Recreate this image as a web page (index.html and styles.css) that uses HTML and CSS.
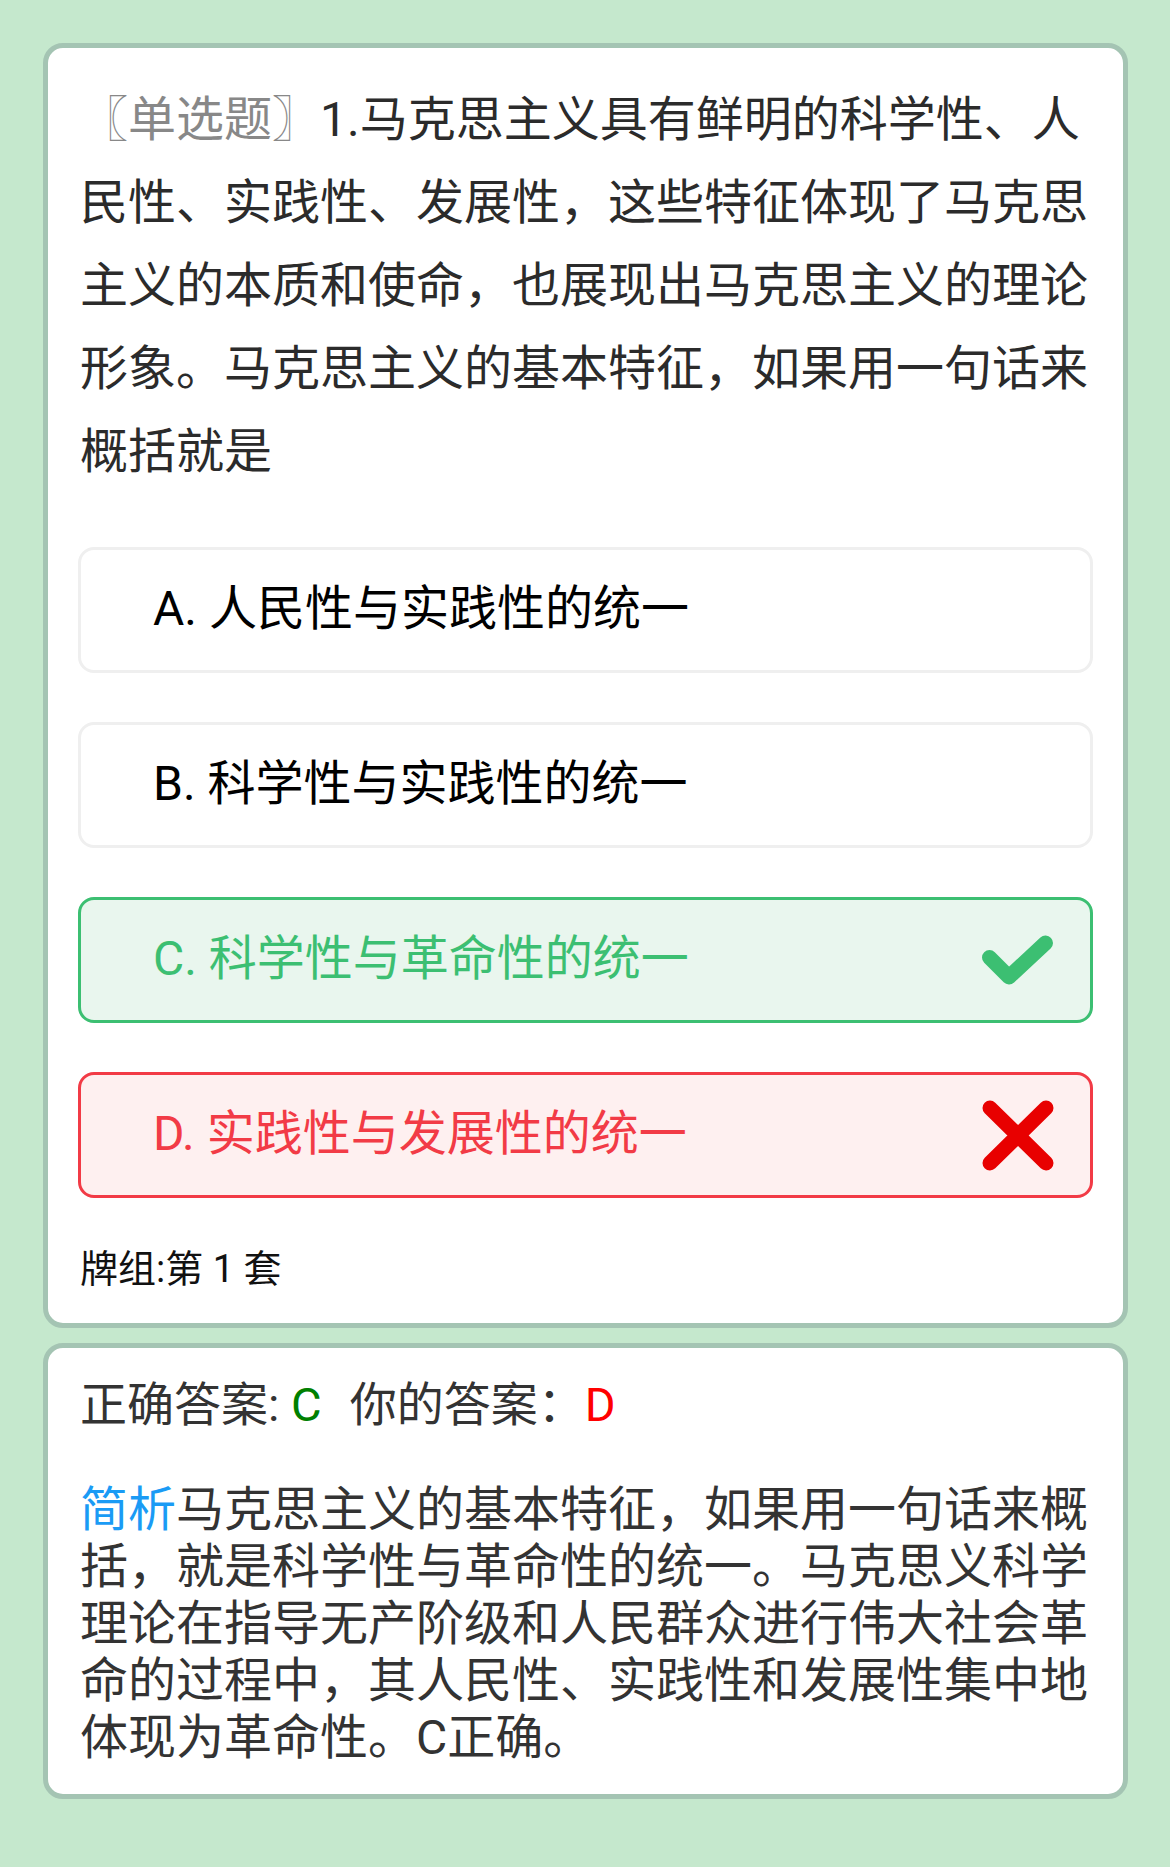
FILE: index.html
```html
<!DOCTYPE html>
<html lang="zh-CN">
<head>
  <meta charset="UTF-8">
  <title>单选题</title>
  <link rel="stylesheet" href="styles.css">
</head>
<body>

<div class="card question-card">
  <div class="question"><span class="qtype">〖单选题〗</span>1.马克思主义具有鲜明的科学性、人民性、实践性、发展性，这些特征体现了马克思主义的本质和使命，也展现出马克思主义的理论形象。马克思主义的基本特征，如果用一句话来概括就是</div>

  <div class="options">
    <div class="option">A. 人民性与实践性的统一</div>
    <div class="option">B. 科学性与实践性的统一</div>
    <div class="option correct">
      <span>C. 科学性与革命性的统一</span>
      <svg class="mark" width="72" height="72" viewBox="0 0 72 72">
        <polyline points="7.5,33.5 27,53 63.5,19" fill="none" stroke="#3cbf72" stroke-width="15" stroke-linecap="round" stroke-linejoin="round"/>
      </svg>
    </div>
    <div class="option wrong">
      <span>D. 实践性与发展性的统一</span>
      <svg class="mark" width="72" height="72" viewBox="0 0 72 72">
        <path d="M8 9 L64 64 M64 9 L8 64" fill="none" stroke="#e80000" stroke-width="15" stroke-linecap="round"/>
      </svg>
    </div>
  </div>

  <div class="deck">牌组:第 1 套</div>
</div>

<div class="card answer-card">
  <div class="answers">正确答案: <span class="right-ans">C</span><span class="yours">你的答案：</span><span class="wrong-ans">D</span></div>
  <div class="analysis"><span class="tag">简析</span>马克思主义的基本特征，如果用一句话来概括，就是科学性与革命性的统一。马克思义科学理论在指导无产阶级和人民群众进行伟大社会革命的过程中，其人民性、实践性和发展性集中地体现为革命性。C正确。</div>
</div>

</body>
</html>
```

FILE: styles.css
```css
html {
  background: #c5e8cd;
}

body {
  margin: 0;
  padding: 43px 42px 0 43px;
  font-family: Roboto, "Noto Sans CJK SC", sans-serif;
  color: #2b2b2b;
}

.card {
  background: #fff;
  border: 5px solid #a4c4b3;
  border-radius: 20px;
  padding: 28px 30px;
}

.question-card {
  padding-top: 30px;
  padding-bottom: 27px;
}

.answer-card {
  margin-top: 15px;
  padding-top: 29px;
  padding-bottom: 28px;
}

.question {
  padding: 0 2px;
  font-size: 48px;
  line-height: 83px;
  color: #2b2b2b;
}

.qtype {
  color: #888;
}

.options {
  display: flex;
  flex-direction: column;
  gap: 49px;
  margin-top: 54px;
}

.option {
  box-sizing: border-box;
  height: 126px;
  display: flex;
  align-items: center;
  justify-content: space-between;
  padding: 0 36px 12px 72px;
  border: 3px solid #efefef;
  border-radius: 16px;
  font-size: 48px;
  color: #000;
}

.option.correct {
  border-color: #3cbf72;
  background: #e9f6ee;
  color: #3cbf72;
}

.option.wrong {
  border-color: #f23b46;
  background: #fef0f0;
  color: #f23b46;
}

.mark {
  display: block;
  margin-top: 12px;
}

.deck {
  margin-top: 45px;
  padding: 0 2px;
  font-size: 38px;
  line-height: 53px;
  color: #111;
}

.answers {
  padding: 0 2px;
  font-size: 47px;
  line-height: 56px;
  color: #333;
}

.right-ans {
  color: #008000;
}

.yours {
  margin-left: 28px;
}

.wrong-ans {
  color: #f00;
}

.analysis {
  margin-top: 48px;
  padding: 0 2px;
  font-size: 48px;
  line-height: 57px;
  color: #333;
}

.tag {
  color: #1a9bf5;
}
```
